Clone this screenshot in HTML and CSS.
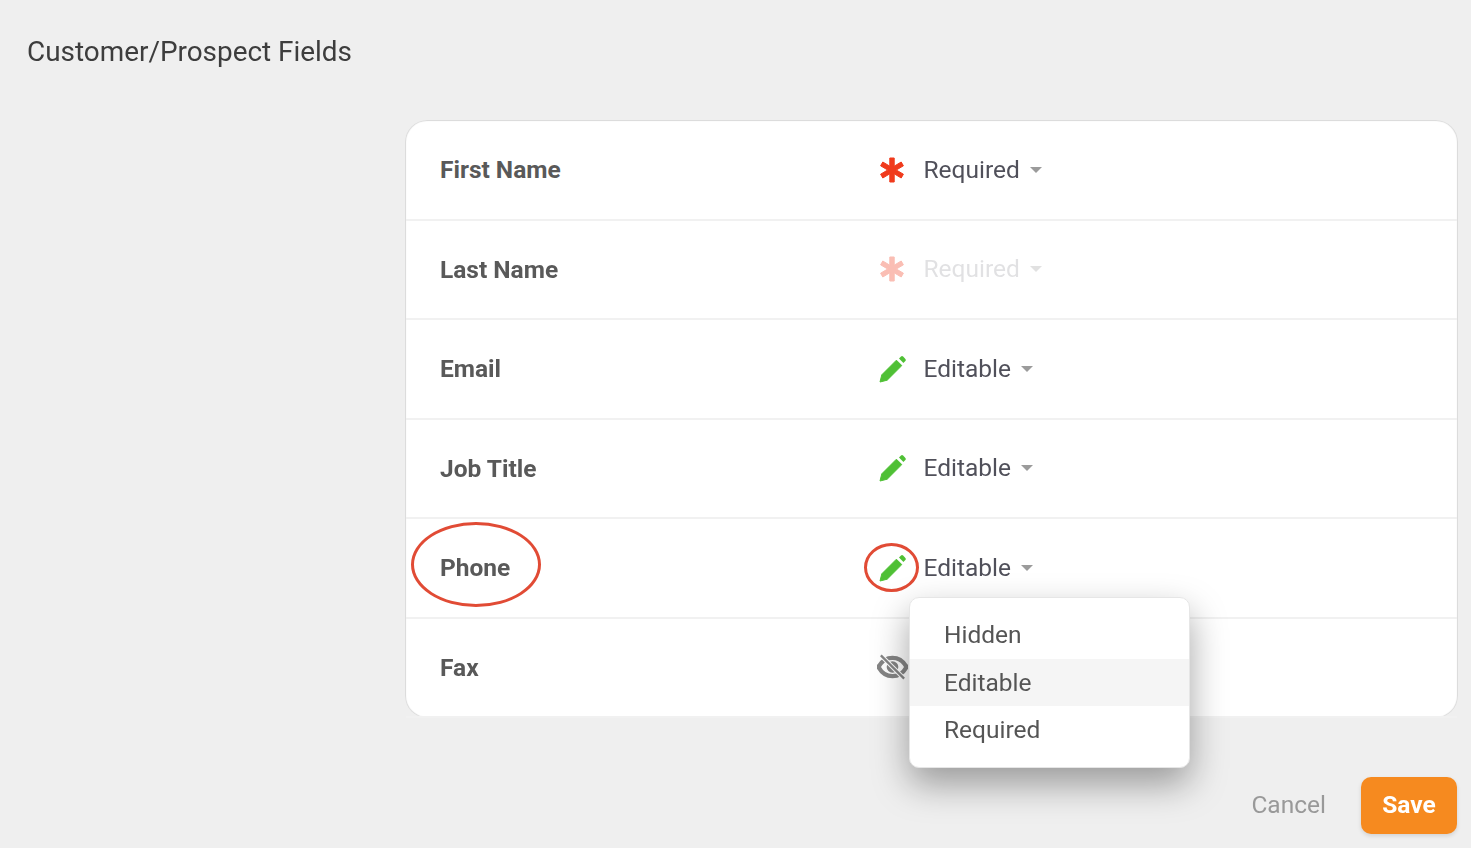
FILE: index.html
```html
<!DOCTYPE html>
<html lang="en">
<head>
<meta charset="utf-8">
<title>Customer/Prospect Fields</title>
<link rel="stylesheet" href="styles.css">
</head>
<body>
<svg class="defs" width="0" height="0" aria-hidden="true">
  <symbol id="ast" viewBox="0 0 26 26"><path d="M10.800 1h4.400v8.200l7-4.200 2.200 3.800-7.100 4.200 7.100 4.200-2.200 3.800-7-4.200V25h-4.400v-8.200l-7 4.200-2.200-3.800 7.100-4.200-7.100-4.200L3.800 5l7 4.200z" fill="currentColor" stroke="currentColor" stroke-width="1" stroke-linejoin="round"/></symbol>
  <symbol id="pen" viewBox="0 0 28 28"><path d="M1 27l1.800-7.200L17.400 5.200l5.400 5.400L8.200 25.200z" fill="currentColor" stroke="currentColor" stroke-width="1" stroke-linejoin="round"/><path d="M20 3.600l2-2a1.500 1.500 0 0 1 2.100 0l2.300 2.300a1.500 1.500 0 0 1 0 2.100l-2 2z" fill="currentColor"/></symbol>
</svg>
<main class="page">
  <h1 class="title">Customer/Prospect Fields</h1>
  <section class="card">
    <div class="row"><span class="name">First Name</span><span class="state"><svg class="ico req"><use href="#ast"/></svg><span class="val">Required</span><i class="caret"></i></span></div>
    <div class="row"><span class="name">Last Name</span><span class="state off"><svg class="ico req"><use href="#ast"/></svg><span class="val">Required</span><i class="caret"></i></span></div>
    <div class="row"><span class="name">Email</span><span class="state"><svg class="ico edit"><use href="#pen"/></svg><span class="val">Editable</span><i class="caret"></i></span></div>
    <div class="row"><span class="name">Job Title</span><span class="state"><svg class="ico edit"><use href="#pen"/></svg><span class="val">Editable</span><i class="caret"></i></span></div>
    <div class="row"><span class="name">Phone</span><span class="state"><svg class="ico edit"><use href="#pen"/></svg><span class="val">Editable</span><i class="caret"></i></span></div>
    <div class="row"><span class="name">Fax</span><span class="state"><svg class="ico hide" viewBox="0 0 32 28"><path d="M1.500 14C5 7.500 10 4.500 16 4.500S27 7.500 30.500 14C27 20.500 22 23.500 16 23.500S5 20.500 1.500 14z" fill="none" stroke="currentColor" stroke-width="4.400"/><circle cx="16" cy="14" r="6" fill="currentColor"/><path d="M4 2l24 24" stroke="#fff" stroke-width="4.500"/><path d="M4 2l24 24" stroke="currentColor" stroke-width="2.400"/></svg></span></div>
    <div class="mark mark-name"></div>
    <div class="mark mark-icon"></div>
    <ul class="menu">
      <li>Hidden</li>
      <li class="active">Editable</li>
      <li>Required</li>
    </ul>
  </section>
  <footer class="actions">
    <button class="cancel" type="button">Cancel</button>
    <button class="save" type="button">Save</button>
  </footer>
</main>
</body>
</html>
```
FILE: styles.css
```css
* { box-sizing: border-box; }
html, body { margin: 0; height: 100%; }
body {
  background: #efefef;
  font-family: Roboto, "Liberation Sans", sans-serif;
  color: #4f4f4f;
  overflow: hidden;
}
.defs { position: absolute; }
.page {
  display: flex;
  flex-direction: column;
  height: 848px;
  padding: 33px 13px 0 27px;
  filter: blur(0.45px);
}
.title {
  margin: 0;
  font-size: 27.900px;
  font-weight: 400;
  line-height: 38px;
  color: #3d3d3d;
}
.card {
  position: relative;
  margin: 49px 0 0 378px;
  height: 598px;
  padding-top: 1px;
  background: #fff;
  box-shadow: inset 0 0 1px 1px #d9d9d9;
  border-radius: 22px;
  display: flex;
  flex-direction: column;
}
.row {
  flex: 1;
  display: flex;
  align-items: center;
  margin: 0 1px;
  padding-left: 34px;
  border-bottom: 2px solid #f1f1f1;
}
.row:last-of-type { border-bottom-color: transparent; }
.name {
  width: 438px;
  font-size: 24.500px;
  font-weight: 700;
  color: #595959;
}
.state {
  display: flex;
  align-items: center;
  font-size: 24.500px;
  color: #50505a;
}
.off .req { opacity: 0.33; }
.off .val { opacity: 0.17; }
.off .caret { opacity: 0.3; }
.ico { width: 28px; height: 28px; flex: none; }
.req { color: #f03a1c; width: 26px; height: 26px; margin: 0 18.500px 0 1px; }
.edit { color: #4fc035; margin: 0 16.500px 0 1px; }
.hide { color: #858585; width: 31px; margin-left: -1px; }
.val { line-height: 30px; }
.caret {
  width: 0;
  height: 0;
  margin-left: 10px;
  border-left: 6.500px solid transparent;
  border-right: 6.500px solid transparent;
  border-top: 6px solid #9b9b9b;
}
.mark {
  position: absolute;
  border: 3.500px solid #e14b35;
  border-radius: 50%;
  pointer-events: none;
}
.mark-name { left: 6px; top: 402px; width: 130px; height: 85px; }
.mark-icon { left: 459px; top: 423px; width: 55px; height: 49px; }
.menu {
  position: absolute;
  left: 504px;
  top: 477px;
  width: 281px;
  height: 171px;
  margin: 0;
  padding: 13px 0 0;
  list-style: none;
  background: #fff;
  border: 1px solid #e6e6e6;
  border-radius: 10px;
  box-shadow: 0 16px 36px rgba(0, 0, 0, 0.36);
  font-size: 24.500px;
  color: #555;
}
.menu li { height: 47.500px; line-height: 47px; padding-left: 34px; }
.menu .active { background: #f5f5f5; }
.actions {
  display: flex;
  justify-content: flex-end;
  align-items: center;
  gap: 35px;
  margin: 59px 1px 0 0;
}
.actions button { font-family: inherit; font-size: 24.500px; border: 0; padding: 0 0 2px; }
.cancel { background: none; color: #999; }
.save {
  width: 96px;
  height: 57px;
  background: #f68a1f;
  color: #fff;
  font-weight: 700;
  border-radius: 10px;
  box-shadow: 0 2px 4px rgba(0, 0, 0, 0.12);
}
```
